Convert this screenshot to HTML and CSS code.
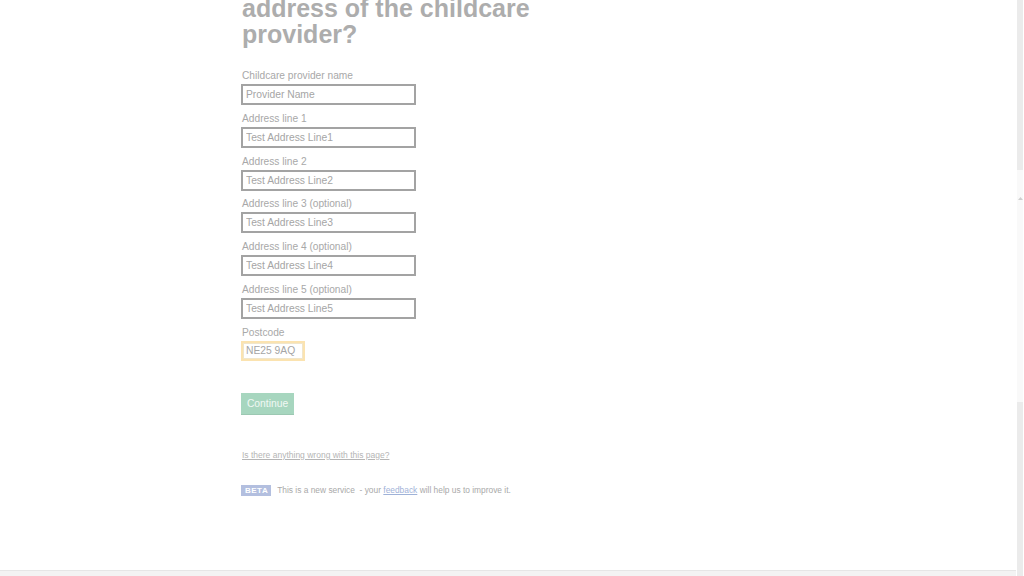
FILE: index.html
```html
<!DOCTYPE html>
<html lang="en">
<head>
<meta charset="utf-8">
<title>What is the name and address of the childcare provider?</title>
<link rel="stylesheet" href="styles.css">
</head>
<body>
<div class="page">
  <main class="main">
    <div class="content">
      <h1 class="heading">What is the name and address of the childcare provider?</h1>
      <form class="form">
        <div class="group">
          <label class="label" for="name">Childcare provider name</label>
          <input class="input" id="name" type="text" value="Provider Name">
        </div>
        <div class="group">
          <label class="label" for="a1">Address line 1</label>
          <input class="input" id="a1" type="text" value="Test Address Line1">
        </div>
        <div class="group">
          <label class="label" for="a2">Address line 2</label>
          <input class="input" id="a2" type="text" value="Test Address Line2">
        </div>
        <div class="group">
          <label class="label" for="a3">Address line 3 (optional)</label>
          <input class="input" id="a3" type="text" value="Test Address Line3">
        </div>
        <div class="group">
          <label class="label" for="a4">Address line 4 (optional)</label>
          <input class="input" id="a4" type="text" value="Test Address Line4">
        </div>
        <div class="group">
          <label class="label" for="a5">Address line 5 (optional)</label>
          <input class="input" id="a5" type="text" value="Test Address Line5">
        </div>
        <div class="group">
          <label class="label" for="pc">Postcode</label>
          <input class="input input-postcode" id="pc" type="text" value="NE25 9AQ">
        </div>
        <button class="button" type="button">Continue</button>
      </form>
      <a class="report-link" href="#">Is there anything wrong with this page?</a>
      <div class="phase">
        <strong class="tag">BETA</strong>
        <span class="phase-text">This is a new service &nbsp;- your <a class="phase-link" href="#">feedback</a> will help us to improve it.</span>
      </div>
    </div>
    <footer class="footer"></footer>
  </main>
  <div class="scrollbar">
    <div class="track track-top"></div>
    <div class="thumb">
      <svg class="thumb-mark" width="5" height="3" viewBox="0 0 5 3"><path d="M0 3 L2.5 0 L5 3 Z" fill="#cfcfcf"/></svg>
    </div>
    <div class="track track-bottom"></div>
  </div>
</div>
</body>
</html>
```
FILE: styles.css
```css
* { box-sizing: border-box; }
html, body { margin: 0; padding: 0; background: #ffffff; }
body {
  font-family: "Liberation Sans", Arial, sans-serif;
  color: #a9a9a9;
}
.page {
  display: flex;
  width: 1024px;
  height: 576px;
  overflow: hidden;
}
.main {
  flex: 1;
  display: flex;
  flex-direction: column;
  overflow: hidden;
}
.content {
  flex: 1;
  padding-left: 241px;
  overflow: hidden;
}
.heading {
  margin: -31px 0 23px 1px;
  width: 300px;
  font-size: 25px;
  line-height: 26px;
  font-weight: 700;
  color: #adadad;
}
.form { display: flex; flex-direction: column; align-items: flex-start; }
.group {
  display: flex;
  flex-direction: column;
  align-items: flex-start;
  margin-bottom: 7.8px;
}
.label {
  font-size: 10.2px;
  line-height: 12px;
  margin: 0 0 2px 1px;
  color: #a8a8a8;
}
.input {
  width: 175px;
  height: 21px;
  border: 2px solid #a3a3a3;
  padding: 0 3px;
  margin: 0;
  font-family: "Liberation Sans", Arial, sans-serif;
  font-size: 10.3px;
  color: #a5a5a5;
  background: #fff;
  outline: none;
  border-radius: 0;
}
.input-postcode {
  width: 64px;
  height: 20px;
  border: 2px solid #fbe3b0;
  box-shadow: inset 0 0 0 1px #f0e6cc;
}
.button {
  margin-top: 24px;
  width: 53px;
  height: 21px;
  padding: 0;
  border: 0;
  background: #a7d6bf;
  box-shadow: 0 1px 0 #9cc8b2;
  color: #f1f8f4;
  font-family: "Liberation Sans", Arial, sans-serif;
  font-size: 10.3px;
  line-height: 21px;
  border-radius: 0;
}
.report-link {
  display: inline-block;
  margin-top: 36px;
  margin-left: 1px;
  font-size: 8.5px;
  line-height: 11px;
  color: #b5b5b5;
  text-decoration: underline;
}
.phase {
  display: flex;
  align-items: center;
  gap: 6px;
  margin-top: 23px;
}
.tag {
  display: inline-block;
  background: #b3bfdf;
  color: #ffffff;
  font-size: 8px;
  line-height: 11px;
  font-weight: 700;
  letter-spacing: 0.5px;
  padding: 0 3px 0 4px;
}
.phase-text {
  font-size: 8.4px;
  line-height: 11px;
  color: #a9a9a9;
}
.phase-link { color: #9fb2d8; text-decoration: underline; }
.footer {
  flex: none;
  height: 6px;
  background: #f3f3f3;
  border-top: 1px solid #e6e6e6;
}
.scrollbar {
  flex: none;
  width: 8px;
  display: flex;
  flex-direction: column;
  padding-left: 1px;
  padding-right: 1px;
  background: #ffffff;
}
.track { background: #ebebeb; }
.track-top { height: 170px; }
.track-bottom { flex: 1; }
.thumb {
  height: 232px;
  background: #f9f9f9;
  display: flex;
  justify-content: center;
  padding-top: 27px;
}
.thumb-mark { display: block; }
```
